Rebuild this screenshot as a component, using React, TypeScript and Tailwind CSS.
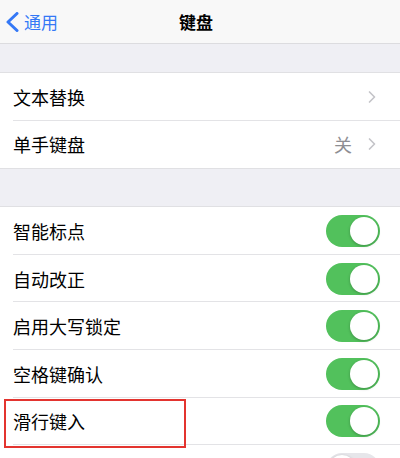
import { ChevronRight } from 'lucide-react';

const FONT = { fontFamily: '"Noto Sans CJK SC", "Noto Sans", sans-serif' };

function Toggle({ on }: { on: boolean }) {
  return (
    <div
      className={
        on
          ? 'w-[54px] h-[32px] rounded-full bg-[#52c15c] p-[2px] flex justify-end'
          : 'w-[54px] h-[32px] rounded-full bg-[#e6e6ea] p-[2px] flex justify-start'
      }
    >
      <div className="w-[28px] h-[28px] rounded-full bg-white shadow-[0_1px_3px_rgba(0,0,0,0.25)]" />
    </div>
  );
}

function Row({
  label,
  last,
  children,
  highlight,
}: {
  label: string;
  last?: boolean;
  children?: React.ReactNode;
  highlight?: boolean;
}) {
  return (
    <div className="relative bg-white h-[47.6px] flex items-center pl-[13px] pr-[20px]">
      <span className="flex-1 text-[18px] text-black leading-none">{label}</span>
      {children}
      {!last && <div className="absolute left-[13px] right-0 bottom-0 h-px bg-[#e3e3e6]" />}
      {highlight && (
        <div className="absolute z-10 left-[4px] top-[1px] w-[182px] h-[49px] border-2 border-[#e3342f]" />
      )}
    </div>
  );
}

export default function App() {
  return (
    <div className="w-[400px] h-[458px] overflow-hidden bg-[#efeff4]" style={FONT}>
      {/* 导航栏 */}
      <div className="h-[44px] bg-[#f8f8f8] border-b border-[#dcdcdf] flex items-center relative">
        <div className="flex items-center text-[#3478f6] pl-[5px]">
          <svg width="14" height="20" viewBox="0 0 14 20" fill="none">
            <polyline
              points="12,1.5 3,10 12,18.5"
              stroke="currentColor"
              strokeWidth="3"
              strokeLinecap="round"
              strokeLinejoin="round"
            />
          </svg>
          <span className="text-[17px] ml-[5px]">通用</span>
        </div>
        <div className="absolute inset-x-0 text-center text-[17px] font-bold text-black pointer-events-none pr-[8px]">
          键盘
        </div>
      </div>

      <div className="h-[28px]" />

      <div className="border-y border-[#e0e0e3]">
        <Row label="文本替换">
          <ChevronRight size={20} strokeWidth={2} className="text-[#c4c4c8] -mr-[2px]" />
        </Row>
        <Row label="单手键盘" last>
          <span className="text-[18px] text-[#8e8e93] mr-[10px]">关</span>
          <ChevronRight size={20} strokeWidth={2} className="text-[#c4c4c8] -mr-[2px]" />
        </Row>
      </div>

      <div className="h-[37px]" />

      <div className="border-t border-[#e0e0e3]">
        <Row label="智能标点">
          <Toggle on />
        </Row>
        <Row label="自动改正">
          <Toggle on />
        </Row>
        <Row label="启用大写锁定">
          <Toggle on />
        </Row>
        <Row label="空格键确认">
          <Toggle on />
        </Row>
        <Row label="滑行键入" highlight>
          <Toggle on />
        </Row>
        <Row label="">
          <Toggle on={false} />
        </Row>
      </div>
    </div>
  );
}
